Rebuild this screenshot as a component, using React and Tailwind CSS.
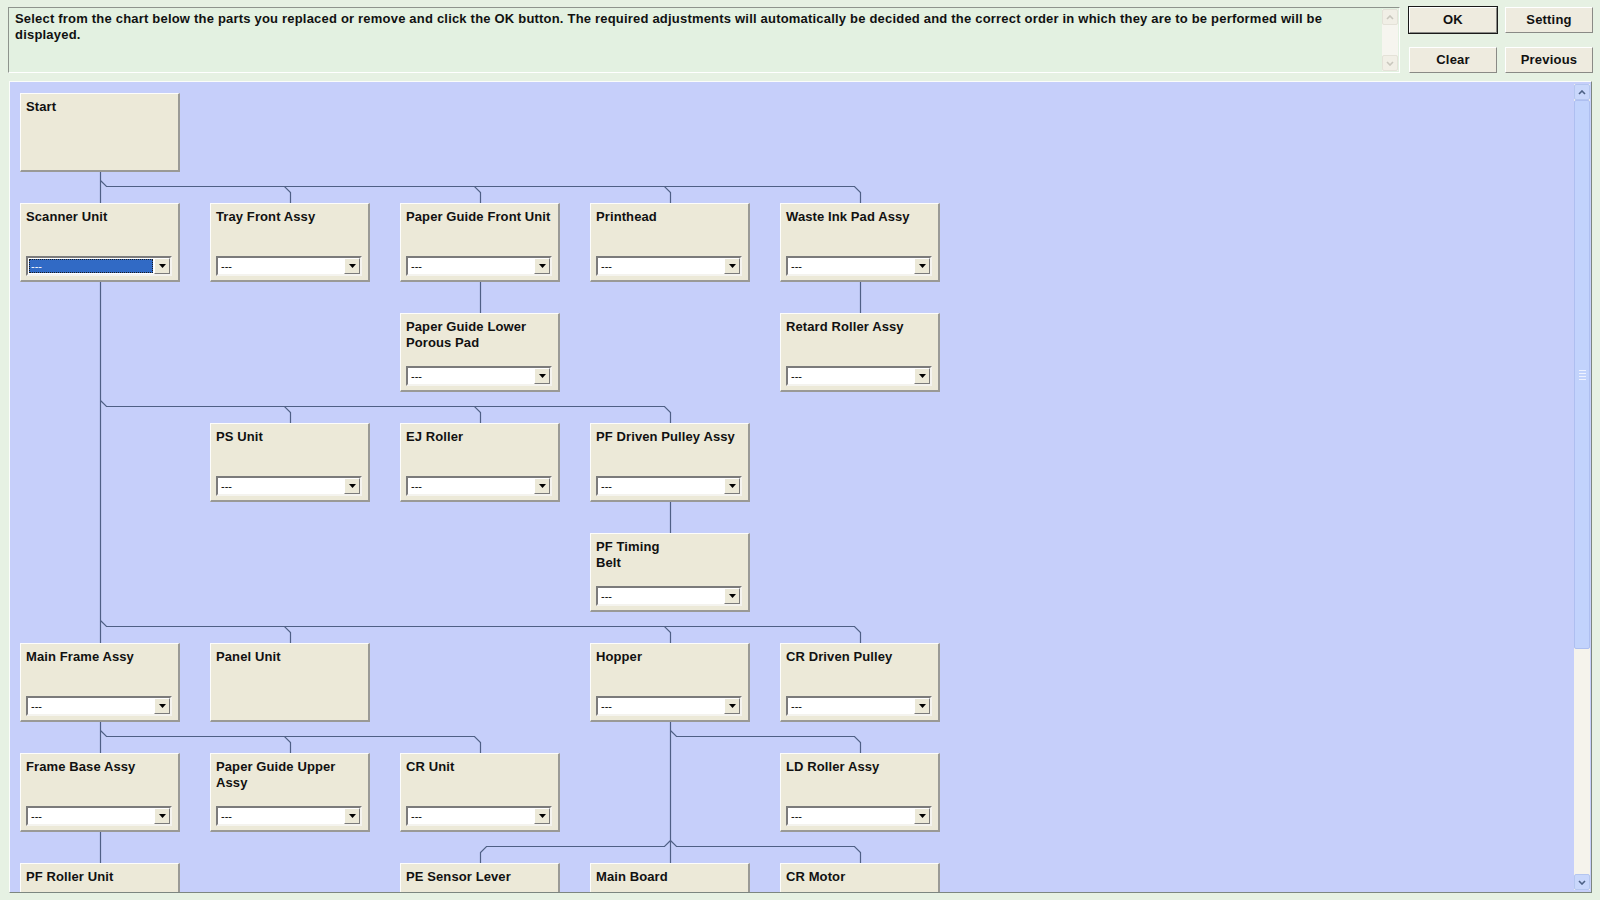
import React from "react";

// grid of the chart: every box is 160x79, columns 190px apart, rows 110px apart
const X = (c) => 10 + 190 * c;
const Y = (r) => 11 + 110 * r;
const CX = (c) => X(c) + 80.5;
const BOT = (r) => Y(r) + 79;

const nodes = [
  { t: "Start", c: 0, r: 0, dd: false },
  { t: "Scanner Unit", c: 0, r: 1, sel: true },
  { t: "Tray Front Assy", c: 1, r: 1 },
  { t: "Paper Guide Front Unit", c: 2, r: 1 },
  { t: "Printhead", c: 3, r: 1 },
  { t: "Waste Ink Pad Assy", c: 4, r: 1 },
  { t: "Paper Guide Lower\nPorous Pad", c: 2, r: 2 },
  { t: "Retard Roller Assy", c: 4, r: 2 },
  { t: "PS Unit", c: 1, r: 3 },
  { t: "EJ Roller", c: 2, r: 3 },
  { t: "PF Driven Pulley Assy", c: 3, r: 3 },
  { t: "PF Timing\nBelt", c: 3, r: 4 },
  { t: "Main Frame Assy", c: 0, r: 5 },
  { t: "Panel Unit", c: 1, r: 5, dd: false },
  { t: "Hopper", c: 3, r: 5 },
  { t: "CR Driven Pulley", c: 4, r: 5 },
  { t: "Frame Base Assy", c: 0, r: 6 },
  { t: "Paper Guide Upper\nAssy", c: 1, r: 6 },
  { t: "CR Unit", c: 2, r: 6 },
  { t: "LD Roller Assy", c: 4, r: 6 },
  { t: "PF Roller Unit", c: 0, r: 7 },
  { t: "PE Sensor Lever", c: 2, r: 7 },
  { t: "Main Board", c: 3, r: 7 },
  { t: "CR Motor", c: 4, r: 7 },
];

const vline = (c, r1, r2) => `M${CX(c)} ${BOT(r1)} V${Y(r2)}`;

// horizontal branch from parent column pc to children of row r
const branch = (pc, r, cols) => {
  const h = Y(r) - 16.5;
  const d = 6;
  return cols
    .map((c) => {
      const s = c > pc ? 1 : -1;
      return `M${CX(pc)} ${h - d} L${CX(pc) + s * d} ${h} H${CX(c) - s * d} L${CX(c)} ${h + d} V${Y(r)}`;
    })
    .join(" ");
};

const lines = [
  vline(0, 0, 7),
  branch(0, 1, [1, 2, 3, 4]),
  vline(2, 1, 2),
  vline(4, 1, 2),
  branch(0, 3, [1, 2, 3]),
  vline(3, 3, 4),
  branch(0, 5, [1, 3, 4]),
  branch(0, 6, [1, 2]),
  vline(3, 5, 7),
  branch(3, 6, [4]),
  branch(3, 7, [2, 4]),
];

const Combo = ({ sel }) => (
  <div className="flex h-[20px] w-[146px] border-2 border-t-[#7b7b7b] border-l-[#7b7b7b] border-b-[#f4f3ee] border-r-[#f4f3ee] bg-white">
    <div className="flex flex-1 p-[1px]">
      <div
        className={
          sel
            ? "flex-1 bg-[#316ac5] text-white outline-1 outline-dotted outline-[#1b1b1b] -outline-offset-1 pl-[2px] text-[11px] leading-[14px]"
            : "flex-1 text-black pl-[2px] text-[11px] leading-[14px]"
        }
      >
        ---
      </div>
    </div>
    <div className="flex w-[16px] items-center justify-center border border-t-white border-l-white border-b-[#7b7b7b] border-r-[#7b7b7b] bg-[#ece9d8]">
      <svg width="7" height="4" viewBox="0 0 7 4">
        <path d="M0 0H7L3.5 4Z" fill="#000" />
      </svg>
    </div>
  </div>
);

const Node = ({ t, c, r, dd = true, sel }) => (
  <div
    className="absolute flex h-[79px] w-[160px] flex-col justify-between border border-t-[#fdfdfb] border-l-[#fdfdfb] border-r-2 border-b-2 border-r-[#9a9a96] border-b-[#9a9a96] bg-[#ece9d8] pl-[5px] pt-[5px] pb-[4px]"
    style={{ left: X(c), top: Y(r) }}
  >
    <div className="whitespace-pre text-[13px] font-bold leading-[16px] tracking-[0.1px] text-[#111]">{t}</div>
    {dd && <Combo sel={sel} />}
  </div>
);

const Btn = ({ label, def }) => (
  <button
    className={
      "h-[26px] w-[88px] bg-[#eeebdf] text-[13px] font-bold tracking-[0.2px] text-[#111] border border-t-white border-l-white border-b-[#8a8a86] border-r-[#8a8a86] " +
      (def ? "outline outline-1 outline-[#1a1a1a]" : "")
    }
  >
    {label}
  </button>
);

const Chevron = ({ up, color }) => (
  <svg width="8" height="5" viewBox="0 0 8 5">
    <path
      d={up ? "M1 4L4 1L7 4" : "M1 1L4 4L7 1"}
      fill="none"
      stroke={color}
      strokeWidth="1.6"
    />
  </svg>
);

export default function App() {
  return (
    <div className="flex h-[900px] w-[1600px] flex-col bg-[#e6f1e3] pl-[8px] pt-[7px] font-['Liberation_Sans',Arial,sans-serif]">
      {/* instructions + buttons */}
      <div className="flex h-[66px] gap-[9px]">
        <div className="flex w-[1392px] border border-t-[#8e948d] border-l-[#8e948d] border-b-white border-r-white bg-[#e3f1e1]">
          <div className="flex-1 whitespace-nowrap pl-[6px] pt-[3px] text-[13px] font-bold leading-[16px] tracking-[0.2px] text-[#111]">
            Select from the chart below the parts you replaced or remove and click the OK button. The required adjustments will automatically be decided and the correct order in which they are to be performed will be
            <br />
            displayed.
          </div>
          <div className="my-[1px] mr-[1px] flex w-[16px] flex-col bg-[#f6f5ef]">
            <div className="flex h-[16px] items-center justify-center rounded-[2px] border border-[#e4e2d8] bg-[#f1efe6]">
              <Chevron up color="#c9c7bd" />
            </div>
            <div className="flex-1" />
            <div className="flex h-[16px] items-center justify-center rounded-[2px] border border-[#e4e2d8] bg-[#f1efe6]">
              <Chevron color="#c9c7bd" />
            </div>
          </div>
        </div>
        <div className="grid grid-cols-2 gap-x-[8px] gap-y-[14px]">
          <Btn label="OK" def />
          <Btn label="Setting" />
          <Btn label="Clear" />
          <Btn label="Previous" />
        </div>
      </div>

      {/* chart panel */}
      <div className="ml-[1px] mt-[8px] flex h-[812px] w-[1583px] border border-t-[#fbfdfa] border-l-[#fbfdfa] border-b-[#7c8680] border-r-[#7c8680] bg-[#c6cffa]">
        <div className="relative flex-1 overflow-hidden">
          <svg className="absolute left-0 top-0" width="1563" height="810">
            <path d={lines.join(" ")} fill="none" stroke="#4f6085" strokeWidth="1.2" />
          </svg>
          {nodes.map((n) => (
            <Node key={n.t} {...n} />
          ))}
        </div>
        <div className="my-[2px] mr-[1px] flex w-[16px] flex-col bg-[#f5f3ec]">
          <div className="flex h-[16px] items-center justify-center rounded-[2px] border border-[#b5c6ef] bg-[#c9d7fb]">
            <Chevron up color="#4d6185" />
          </div>
          <div className="flex h-[549px] flex-col items-center justify-center gap-[2px] rounded-[2px] border border-[#aebff0] bg-[#c2d3fc]">
            <div className="h-px w-[7px] bg-[#eef2fe]" />
            <div className="h-px w-[7px] bg-[#eef2fe]" />
            <div className="h-px w-[7px] bg-[#eef2fe]" />
            <div className="h-px w-[7px] bg-[#eef2fe]" />
          </div>
          <div className="flex-1" />
          <div className="flex h-[16px] items-center justify-center rounded-[2px] border border-[#b5c6ef] bg-[#c9d7fb]">
            <Chevron color="#4d6185" />
          </div>
        </div>
      </div>
    </div>
  );
}
